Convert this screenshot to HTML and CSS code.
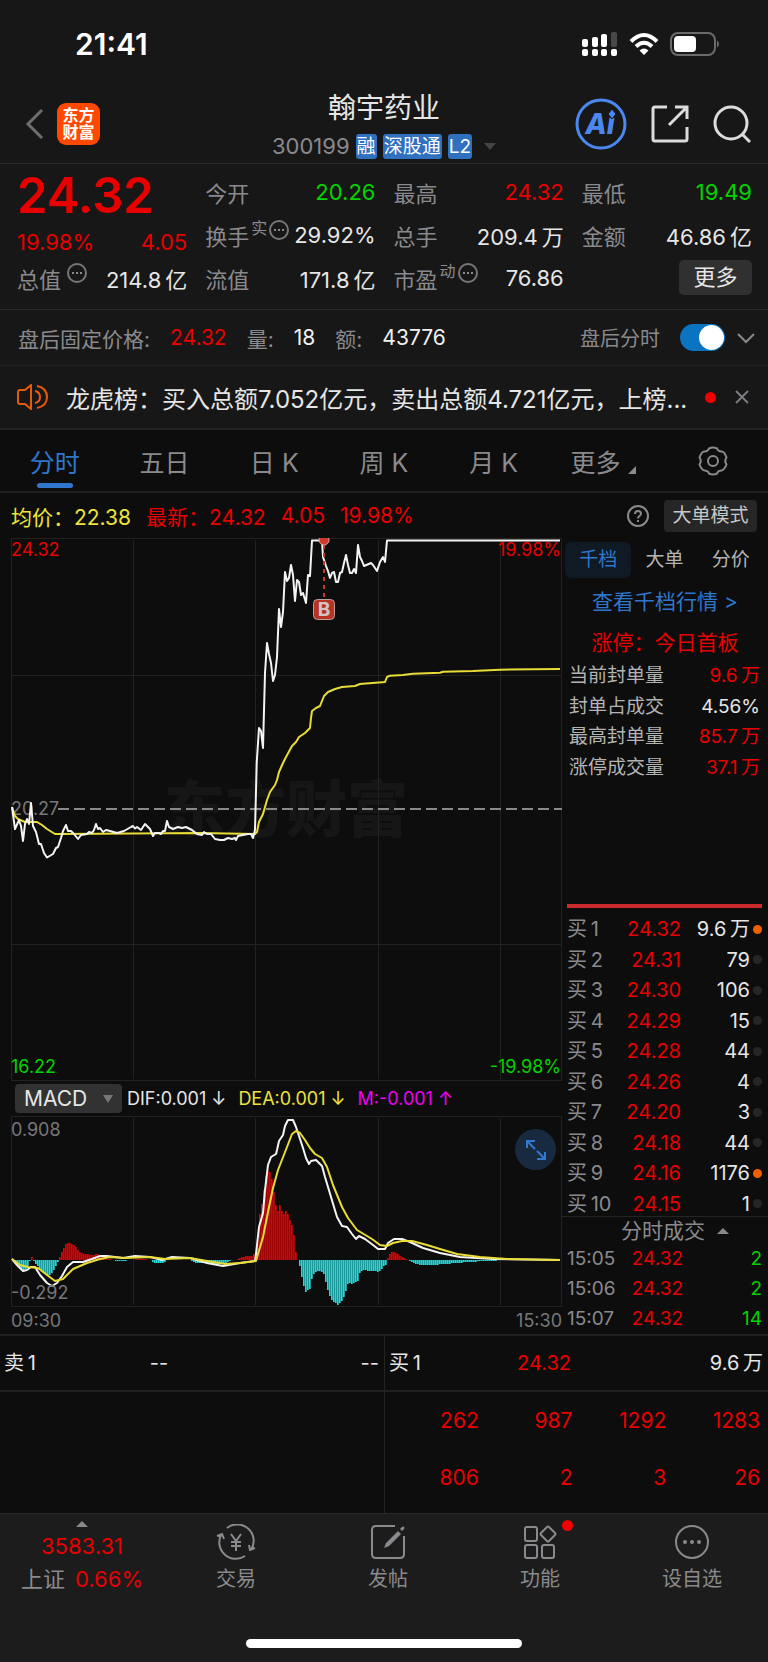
FILE: index.html
```html
<!DOCTYPE html>
<html lang="zh-CN">
	<head>
		<meta charset="utf-8">
		<meta name="viewport" content="width=device-width, initial-scale=1">
		<title>翰宇药业 300199</title>
		<link rel="stylesheet" href="styles.css">
	</head>
	<body>
		<div class="status-bar">
			<span class="clock">21:41</span>
			<div class="status-icons">
				<svg width="36" height="24" viewBox="0 0 36 24" fill="#fff">
					<rect x="0" y="7" width="6" height="8" rx="2"/>
					<rect x="10" y="5" width="6" height="10" rx="2"/>
					<rect x="19" y="2" width="6" height="13" rx="2"/>
					<rect x="29" y="0" width="6" height="15" rx="2" fill="#484848"/>
					<rect x="0" y="17" width="6" height="7" rx="2"/>
					<rect x="10" y="17" width="6" height="7" rx="2"/>
					<rect x="19" y="17" width="6" height="7" rx="2"/>
					<rect x="29" y="17" width="6" height="7" rx="2"/>
				</svg>
				<svg width="30" height="24" viewBox="0 0 30 24" fill="none" stroke="#fff" stroke-width="4">
					<path d="M2 9.500Q15 -3.500 28 9.500"/>
					<path d="M7 14.500Q15 7 23 14.500"/>
					<path d="M10.500 18.500Q15 14.500 19.500 18.500L15 23Z" fill="#fff" stroke="none"/>
				</svg>
				<svg width="49" height="24" viewBox="0 0 49 24">
					<rect x="1" y="1" width="44" height="22" rx="7" fill="none" stroke="#6b6b6b" stroke-width="2"/>
					<rect x="4" y="4" width="22" height="16" rx="4" fill="#fff"/>
					<path d="M47 8.500q2 1 2 3.500t-2 3.500z" fill="#6b6b6b"/>
				</svg>
			</div>
		</div>

		<header class="header">
			<div class="header-left">
				<button class="icon-button" aria-label="返回">
					<svg width="20" height="34" viewBox="0 0 20 34" fill="none" stroke="#6e6e6e" stroke-width="3"><path d="M17 3L3 17l14 14"/></svg>
				</button>
				<a class="logo" href="#">东方<br>财富</a>
			</div>
			<div class="stock">
				<h1>翰宇药业</h1>
				<p class="stock-code">300199 <span class="badge">融</span><span class="badge">深股通</span><span class="badge">L2</span><i class="tri-down"></i></p>
			</div>
			<div class="header-right">
				<button class="icon-button" aria-label="Ai">
					<svg width="52" height="52" viewBox="0 0 52 52">
						<circle cx="26" cy="26" r="24" fill="none" stroke="#4b87ee" stroke-width="3"/>
						<text class="ai-text" x="25" y="36" text-anchor="middle">Ai</text>
						<path d="M37 11l4 5-4 5-4-5z" fill="#4b87ee" stroke="#171717"/>
					</svg>
				</button>
				<button class="icon-button" aria-label="分享">
					<svg width="38" height="38" viewBox="0 0 38 38" fill="none" stroke="#dcdcdc" stroke-width="3"><path d="M16 2H4Q2 2 2 4v30q0 2 2 2h30q2 0 2-2V22M24 2h12v12M36 2L18 20"/></svg>
				</button>
				<button class="icon-button" aria-label="搜索">
					<svg width="38" height="38" viewBox="0 0 38 38" fill="none" stroke="#dcdcdc" stroke-width="3"><circle cx="18" cy="18" r="16"/><path d="M29 29l8 8"/></svg>
				</button>
			</div>
		</header>

		<section class="quote">
			<div class="price red">
				<strong>24.32</strong>
				<div class="change"><span>19.98%</span><span>4.05</span></div>
			</div>
			<div class="cell">今开<b class="green">20.26</b></div>
			<div class="cell">最高<b class="red">24.32</b></div>
			<div class="cell">最低<b class="green">19.49</b></div>
			<div class="cell">换手<sup>实</sup><svg class="more-dot" width="20" height="20" viewBox="0 0 20 20"><use href="#dots"/></svg><b>29.92%</b></div>
			<div class="cell">总手<b>209.4&thinsp;万</b></div>
			<div class="cell">金额<b>46.86&thinsp;亿</b></div>
			<div class="cell">总值<svg class="more-dot wide" width="20" height="20" viewBox="0 0 20 20"><use href="#dots"/></svg><b>214.8&thinsp;亿</b></div>
			<div class="cell">流值<b>171.8&thinsp;亿</b></div>
			<div class="cell">市盈<sup>动</sup><svg class="more-dot" width="20" height="20" viewBox="0 0 20 20"><use href="#dots"/></svg><b>76.86</b></div>
			<button class="more">更多</button>
		</section>

		<section class="after-hours">
			<span>盘后固定价格:</span><b class="red">24.32</b>
			<span>量:</span><b>18</b>
			<span>额:</span><b>43776</b>
			<label class="switch-label" for="after">盘后分时</label>
			<input class="switch" type="checkbox" id="after" checked>
			<svg width="18" height="12" viewBox="0 0 18 12" fill="none" stroke="#8a8a8e" stroke-width="2"><path d="M1 2l8 8 8-8"/></svg>
		</section>

		<section class="notice">
			<svg width="32" height="26" viewBox="0 0 32 26" fill="none" stroke="#e65a0c" stroke-width="2"><path d="M14 1v24L8 20H3q-2 0-2-2V8q0-2 2-2h5zM18 7q5 1 5 6t-5 6M20 2q10 2 10 11T20 24"/></svg>
			<p>龙虎榜：买入总额7.052亿元，卖出总额4.721亿元，上榜...</p>
			<i class="dot"></i>
			<button class="icon-button" aria-label="关闭">
				<svg width="14" height="14" viewBox="0 0 14 14" stroke="#7c7c80" stroke-width="2"><path d="M1 1l12 12M13 1L1 13"/></svg>
			</button>
		</section>

		<nav class="tabs">
			<a class="active" href="#">分时</a>
			<a href="#">五日</a>
			<a href="#">日 K</a>
			<a href="#">周 K</a>
			<a href="#">月 K</a>
			<a href="#">更多<i class="corner"></i></a>
			<a href="#" aria-label="设置">
				<svg width="30" height="30" viewBox="0 0 30 30" fill="none" stroke="#8a8a8e" stroke-width="2"><path d="M11 2.500Q15 .500 19 2.500Q20 5.500 23.500 5.500Q26.500 5.500 28.500 11.500Q26 15 28.500 18.500Q26.500 24 23.500 24.500Q20 24.500 19 27.500Q15 29.500 11 27.500Q10 24.500 6.500 24.500Q3.500 24 1.500 18.500Q4 15 1.500 11.500Q3.500 5.500 6.500 5.500Q10 5.500 11 2.500Z"/><circle cx="15" cy="15" r="5"/></svg>
			</a>
		</nav>

		<div class="info">
			<span class="yellow">均价：22.38</span>
			<span class="red">最新：24.32</span>
			<span class="red">4.05</span>
			<span class="red">19.98%</span>
			<button class="icon-button help" aria-label="帮助">
				<svg width="22" height="22" viewBox="0 0 22 22" fill="none" stroke="#8a8a8e" stroke-width="2"><circle cx="11" cy="11" r="10"/><path d="M8 9q0-3 3-3t3 2.500q0 1.500-1.500 2.500T11 13.500M11 15v2"/></svg>
			</button>
			<button class="big-order">大单模式</button>
		</div>

		<main class="main">
			<div class="charts">
				<svg class="chart" viewBox="11 538 551 543">
					<text class="watermark" x="164" y="832">东方财富</text>
					<path class="grid" d="M11.500 538V1081M133.500 540V1079M255.500 540V1079M378.500 540V1079M500.500 540V1079M561.500 538V1081M11 538.500H562M11 675.500H562M11 944.500H562M11 1080.500H562"/>
					<path class="base-line" d="M58 809H562"/>
					<text class="mute" x="11" y="815">20.27</text>
					<polyline class="line yellow-line" points="12,807 15,816 18,819 25,822 37,822 42,825 47,829 55,834 60,834 133,833.600 200,833 255,834 257,832 259,822 263,814 267,800 270,792 275,785 277,780 279,772 283,763 286,757 292,746 296,742 299,737 305,733 310,728 311,718 312,711 316,708 320,706 322,701 324,696 328,692 335,689 342,687 355,686 360,684 385,682 387,677 390,675.700 403,675 413,673.700 440,672.700 443,671.700 473,671 500,669.700 560,669"/>
					<polyline class="line white-line" points="12,807 15,829 19,820 21,826 23,841 25,824 27,819 29,824 31,803 33,826 36,832 39,844 41,844 44,853 47,857.500 53,854 56,848 58,847 61,838 63,831 66,825 68,831 71,831 74,834 78,839 81,835 87,834 89,832 92,833 94,830 96,824 98,829 100,828 103,832 106,830 110,831 117,833 124,831 131,827 133,826 135,828.500 137,827 141,830 145,824 150,829 153,836 155,833 159,833 161,834 163,831 165,831 167,821 169,827 173,829 178,827 182,828 186,827 192,830 197,834 202,835 204,832 207,834 211,834 215,839 220,840 224,840 228,838 232,839 235,838 236,840 238,836 243,835 248,834 251,834 253,838 255,830 256.700,763 259,728 261,731 263,748 265,673 267,643 269,654 271,663 273,681 275,675 277,657 279,609 281,627 283,612 285,572 287,581 289,578 291,565 293,575 295,601 297,580 299,582 301,595 303,593 306,603 308,575 310,576 312,540.500 322,540.500 323,557 326,566 328,571 330,578 332,573 334,572 336,582 338,582 340,573 342,572 344,563 346,555 348,565 350,573 352,573 354,569 356,573 358,545 360,557 362,561 364,566 371,563 373,565 377,571 380,562 383,557 385,562 387,540.500 560,540.500"/>
					<path d="M324 545V599" stroke="#c0392b" stroke-width="2" stroke-dasharray="4 4"/>
					<circle cx="324" cy="540" r="5" fill="#d03a2a" stroke="#d8a8a0"/>
					<rect x="313.500" y="599.500" width="21" height="20" rx="4" fill="#b93222" stroke="#b9a09c"/>
					<text class="mark" x="324" y="616" text-anchor="middle">B</text>
					<text class="high" x="11" y="556">24.32</text>
					<text class="high" x="561" y="556" text-anchor="end">19.98%</text>
					<text class="low" x="11" y="1073">16.22</text>
					<text class="low" x="561" y="1073" text-anchor="end">-19.98%</text>
				</svg>

				<div class="indicator">
					<div class="picker">
						<select aria-label="指标"><option>MACD</option></select>
						<i class="tri-down"></i>
					</div>
					<span>DIF:0.001 ↓</span>
					<span class="yellow">DEA:0.001 ↓</span>
					<span class="magenta">M:-0.001 ↑</span>
				</div>

				<div class="macd">
					<svg class="chart" viewBox="11 1116 551 191">
						<path class="grid" d="M11.500 1116V1307M133.500 1118V1305M255.500 1118V1305M378.500 1118V1305M500.500 1118V1305M561.500 1116V1307M11 1116.500H562M11 1306.500H562"/>
						<g id="bars"></g>
						<polyline class="line white-line" points="12,1259 17,1265 23,1271 27,1270 31,1267 35,1267 40,1275 47,1283 52,1286 57,1283 62,1276 67,1267 73,1262 83,1262 92,1259 100,1256 107,1256 123,1258 135,1256 150,1257 162,1260 172,1257 190,1258 207,1263 223,1266 240,1263 255,1261 256,1254 259,1227 263,1213 265,1190 268,1165 271,1157 276,1154 277,1150 279,1141 283,1135 285,1126 288,1120 293,1120 296,1127 299,1136 303,1148 306,1158 309,1164 311,1161 316,1160 322,1166 325,1177 331,1197 337,1217 342,1226 347,1227 352,1234 356,1239 359,1236 365,1239 373,1245 378,1249 385,1249 388,1243 394,1239 402,1239 410,1242 423,1248 440,1253 460,1257 493,1259 560,1260"/>
						<polyline class="line yellow-line" points="12,1259 20,1265 28,1267 38,1268 47,1275 55,1281 63,1279 73,1269 87,1263 100,1259 110,1257 125,1258 150,1257 165,1259 190,1258 207,1261 225,1264 240,1263 256,1261 258,1254 263,1237 268,1212 273,1188 278,1170 287,1147 292,1134 296,1131 300,1133 305,1140 310,1148 315,1154 322,1158 327,1167 333,1185 342,1207 348,1218 357,1230 372,1239 380,1245 387,1246 393,1243 402,1241 412,1241 427,1245 440,1249 457,1254 480,1257 507,1259 560,1260"/>
						<text class="mute" x="11" y="1136">0.908</text>
						<text class="mute" x="11" y="1299">-0.292</text>
					</svg>
					<button class="expand" aria-label="全屏">
						<svg width="22" height="22" viewBox="0 0 22 22" fill="none" stroke="#3079cf" stroke-width="2"><path d="M2 9V2h8M2 2l8 8M20 13v7h-8M20 20l-8-8"/></svg>
					</button>
				</div>

				<div class="axis"><span>09:30</span><span>15:30</span></div>
			</div>

			<aside class="side">
				<div class="side-tabs">
					<button class="active">千档</button>
					<button>大单</button>
					<button>分价</button>
				</div>
				<a class="depth-link" href="#">查看千档行情 &gt;</a>
				<h2 class="limit-title">涨停：今日首板</h2>
				<table class="limit">
					<tr><th>当前封单量</th><td class="red">9.6&thinsp;万</td></tr>
					<tr><th>封单占成交</th><td>4.56%</td></tr>
					<tr><th>最高封单量</th><td class="red">85.7&thinsp;万</td></tr>
					<tr><th>涨停成交量</th><td class="red">37.1&thinsp;万</td></tr>
				</table>

				<div class="ratio"></div>
				<table class="bids">
					<tr><th>买&thinsp;1</th><td class="red">24.32</td><td>9.6&thinsp;万</td><td><i class="on"></i></td></tr>
					<tr><th>买&thinsp;2</th><td class="red">24.31</td><td>79</td><td><i></i></td></tr>
					<tr><th>买&thinsp;3</th><td class="red">24.30</td><td>106</td><td><i></i></td></tr>
					<tr><th>买&thinsp;4</th><td class="red">24.29</td><td>15</td><td><i></i></td></tr>
					<tr><th>买&thinsp;5</th><td class="red">24.28</td><td>44</td><td><i></i></td></tr>
					<tr><th>买&thinsp;6</th><td class="red">24.26</td><td>4</td><td><i></i></td></tr>
					<tr><th>买&thinsp;7</th><td class="red">24.20</td><td>3</td><td><i></i></td></tr>
					<tr><th>买&thinsp;8</th><td class="red">24.18</td><td>44</td><td><i></i></td></tr>
					<tr><th>买&thinsp;9</th><td class="red">24.16</td><td>1176</td><td><i class="on"></i></td></tr>
					<tr><th>买&thinsp;10</th><td class="red">24.15</td><td>1</td><td><i></i></td></tr>
				</table>
				<h2 class="trades-title">分时成交<i class="tri-up"></i></h2>
				<table class="trades">
					<tr><th>15:05</th><td class="red">24.32</td><td class="green">2</td></tr>
					<tr><th>15:06</th><td class="red">24.32</td><td class="green">2</td></tr>
					<tr><th>15:07</th><td class="red">24.32</td><td class="green">14</td></tr>
				</table>
			</aside>
		</main>

		<section class="queue">
			<div class="queue-side">
				<div class="queue-head"><span>卖&thinsp;1</span><span>--</span><span>--</span></div>
			</div>
			<div class="queue-side">
				<div class="queue-head"><span>买&thinsp;1</span><span class="red">24.32</span><span>9.6&thinsp;万</span></div>
				<div class="queue-list red">
					<span>262</span><span>987</span><span>1292</span><span>1283</span>
					<span>806</span><span>2</span><span>3</span><span>26</span>
				</div>
			</div>
		</section>

		<footer class="footer">
			<nav class="bottom-nav">
				<a class="index" href="#">
					<i class="tri-up"></i>
					<span class="red">3583.31</span>
					<span>上证<b class="red">0.66%</b></span>
				</a>
				<a href="#">
					<svg width="40" height="36" viewBox="0 0 40 36" fill="none" stroke="#8a8a8e" stroke-width="2"><path d="M11 4A16.500 16.500 0 0 1 35 26M29 32A16.500 16.500 0 0 1 5 11M1 12l5-2 2 5M39 24l-5 2-1-5M15 10l5 7 5-7M20 17v10M15 18h10M15 22h10"/></svg>
					<span>交易</span>
				</a>
				<a href="#">
					<svg width="36" height="36" viewBox="0 0 36 36" fill="none" stroke="#8a8a8e" stroke-width="2"><path d="M25 2H6Q2 2 2 6v24q0 4 4 4h24q4 0 4-4V12"/><path d="M14 24l2-5L28 7l3 3-12 12zM30 5l2-2q1-1 2 0t0 2l-2 2z" fill="#8a8a8e" stroke="none"/></svg>
					<span>发帖</span>
				</a>
				<a href="#">
					<span class="icon-wrap">
						<svg width="36" height="36" viewBox="0 0 36 36" fill="none" stroke="#8a8a8e" stroke-width="2"><rect x="3" y="3" width="12" height="14" rx="2"/><rect x="3" y="21" width="12" height="13" rx="2"/><rect x="20" y="21" width="12" height="13" rx="2"/><path d="M25 3q1-1 2 0l6 6q1 1 0 2l-6 6q-1 1-2 0l-6-6q-1-1 0-2z"/></svg>
						<i class="dot"></i>
					</span>
					<span>功能</span>
				</a>
				<a href="#">
					<svg width="36" height="36" viewBox="0 0 36 36"><circle cx="18" cy="18" r="16" fill="none" stroke="#8a8a8e" stroke-width="2"/><g fill="#8a8a8e"><circle cx="11" cy="18" r="2"/><circle cx="18" cy="18" r="2"/><circle cx="25" cy="18" r="2"/></g></svg>
					<span>设自选</span>
				</a>
			</nav>
			<div class="home-bar"></div>
		</footer>

		<svg class="defs" width="0" height="0">
			<g id="dots"><circle cx="10" cy="10" r="9" fill="none" stroke="#77777b" stroke-width="2"/><path d="M5 9h2v2H5zM9 9h2v2H9zM13 9h2v2h-2z" fill="#8a8a8e"/></g>
		</svg>

		<script>
			// runs of MACD bars: first x, then one height per 2px step
			var runs = [
				[14, -2, -4, -7, -8, -9, -11, -9, -6, -1, 3, -1, -4, -6, -9, -11, -13, -15, -16, -15, -13, -10, -6, -2],
				[60, 3, 8, 12, 16, 17, 17, 16, 15, 13, 10, 8, 7, 6, 6, 6, 5, 5, 5, 6, 6, 5, 4, 3, 2, 1, 1],
				[116, -1, -1, -1, -1, -1, -1],
				[136, 1, 1, 1, 1, 1, 1],
				[153, -2, -3, -3, -3, -3, -3, -2],
				[192, -1, -2, -3, -3, -3, -3, -3, -3, -3, -3, -4, -4, -4, -4, -4, -4, -3, -3, -2, -1],
				[238, 1, 2, 3, 3, 4, 4, 4, 4, 6],
				[258, 20, 46, 56, 70, 84, 89, 88, 81, 68, 55, 49, 55, 49, 46, 49, 46, 40, 35, 25, 8],
				[300, -6, -17, -26, -32, -30, -29, -19, -14, -12, -11, -11, -12, -14, -22, -30, -36, -40, -42, -43, -45, -43, -41, -37, -31, -24, -23, -24, -23, -22, -21, -13, -11, -10, -10, -11, -11, -11, -11, -11, -12, -11, -9, -6, -5],
				[388, 2, 6, 8, 8, 7, 6, 4, 3, 2, 1],
				[410, -1, -2, -3, -4, -4, -5, -5, -5, -5, -5, -5, -5, -5, -5, -5, -4, -4, -4, -4, -4, -4, -3, -3, -3, -3, -3, -3, -2, -2, -2, -2, -2, -2, -2, -1, -1, -1, -1, -1, -1, -1, -1, -1, -1]
			];
			var html = "";
			runs.forEach(function(run) {
				for (var i = 1; i < run.length; i++) {
					var h = run[i];
					html += '<rect class="' + (h > 0 ? "up" : "down") + '" x="' + (run[0] + i * 2 - 3) +
						'" y="' + (h > 0 ? 1260 - h : 1260) + '" width="1.7" height="' + Math.abs(h) + '"/>';
				}
			});
			document.getElementById("bars").innerHTML = html;
		</script>
	</body>
</html>
```
FILE: styles.css
```css
* {
	box-sizing: border-box;
}

body {
	margin: 0;
	background-color: #0d0d0d;
	color: #e6e6e6;
	font-family: Inter, "Noto Sans CJK SC", sans-serif;
	font-size: 20px;
	white-space: nowrap;
}

h1, h2, p {
	margin: 0;
	font-weight: 400;
}

a {
	color: inherit;
	text-decoration: none;
}

b, th {
	font-weight: 400;
}

svg {
	display: block;
	flex: none;
}

button, select {
	font: inherit;
	color: inherit;
	border: 0;
	padding: 0;
	background: none;
}

.red { color: #e80000; }
.green { color: #00d400; }
.yellow { color: #ece33c; }
.magenta { color: #f000f0; }

.defs {
	position: absolute;
}

.tri-down, .tri-up {
	display: inline-block;
	border: 6px solid transparent;
}

.tri-down {
	border-top: 7px solid #444446;
	border-bottom: 0;
}

.tri-up {
	border-bottom: 6px solid #8a8a8e;
	border-top: 0;
}

.dot {
	width: 11px;
	height: 11px;
	border-radius: 50%;
	background-color: #f00000;
}

/* status bar and header */
.status-bar, .header, .quote, .after-hours, .notice {
	background-color: #171717;
}

.status-bar {
	display: flex;
	justify-content: space-between;
	align-items: center;
	height: 80px;
	padding: 8px 49px 0 75px;
}

.clock {
	color: #fff;
	font-size: 30px;
	font-weight: 600;
}

.status-icons {
	display: flex;
	gap: 11px;
}

.header {
	display: grid;
	grid-template-columns: 1fr auto 1fr;
	align-items: center;
	padding: 8px 17px 3px;
	border-bottom: 1px solid #2a2a2a;
}

.header-left, .header-right {
	display: flex;
	align-items: center;
}

.header-left {
	gap: 12px;
	padding-left: 8px;
}

.header-right {
	justify-content: flex-end;
	gap: 24px;
}

.logo {
	width: 43px;
	padding: 4px 0;
	border-radius: 9px;
	background-color: #ff4800;
	color: #fff;
	font-size: 16px;
	font-weight: 700;
	line-height: 17px;
	text-align: center;
}

.ai-text {
	fill: #4b87ee;
	font-size: 28px;
	font-weight: 800;
	font-style: italic;
}

.stock {
	text-align: center;
}

.stock h1 {
	font-size: 28px;
	line-height: 40px;
}

.stock-code {
	display: flex;
	align-items: center;
	gap: 6px;
	padding-top: 4px;
	color: #8a8a8e;
	font-size: 22px;
	line-height: 28px;
}

.stock-code .tri-down {
	margin-left: 6px;
}

.badge {
	padding: 0 1px;
	border-radius: 3px;
	background-color: #2f70bf;
	color: #fff;
	font-size: 19px;
	line-height: 25px;
}

/* quote */
.quote {
	display: grid;
	grid-template-columns: repeat(4, 1fr);
	grid-auto-rows: 43px;
	column-gap: 18px;
	padding: 6px 16px 10px 17px;
	border-bottom: 1px solid #2a2a2a;
	font-size: 22px;
}

.price {
	grid-row: span 2;
	display: flex;
	flex-direction: column;
	justify-content: space-between;
	padding-top: 2px;
}

.price strong {
	font-size: 49px;
	font-weight: 600;
	line-height: 48px;
}

.change {
	display: flex;
	justify-content: space-between;
	line-height: 28px;
}

.cell {
	display: flex;
	align-items: center;
	color: #8a8a8e;
}

.cell b {
	margin-left: auto;
	color: #e6e6e6;
}

.cell b.red { color: #e80000; }
.cell b.green { color: #00d400; }

.cell sup {
	padding: 0 2px 14px;
	font-size: 16px;
	line-height: 20px;
}

.more-dot {
	margin-bottom: 10px;
}

.more-dot.wide {
	margin-left: 6px;
}

.more {
	justify-self: end;
	align-self: center;
	width: 73px;
	border-radius: 5px;
	background-color: #303030;
	line-height: 35px;
}

.after-hours {
	display: flex;
	align-items: center;
	height: 56px;
	padding: 0 13px 0 18px;
	border-bottom: 1px solid #202020;
	color: #8a8a8e;
	font-size: 21px;
}

.after-hours b {
	margin: 0 20px;
}

.after-hours b:not(.red) {
	color: #f0f0f0;
}

.switch-label {
	margin-left: auto;
	font-size: 20px;
}

.switch {
	appearance: none;
	display: flex;
	justify-content: flex-end;
	width: 45px;
	height: 27px;
	margin: 0 12px 0 20px;
	padding: 1px;
	border-radius: 14px;
	background-color: #0a73c2;
}

.switch::before {
	content: "";
	width: 25px;
	border-radius: 50%;
	background-color: #fff;
}

.notice {
	display: flex;
	align-items: center;
	height: 64px;
	padding: 0 19px 0 17px;
	border-bottom: 2px solid #222;
	font-size: 24px;
}

.notice p {
	flex: 1;
	margin-left: 17px;
	overflow: hidden;
}

.notice .dot {
	margin: 0 19px;
}

/* tabs */
.tabs {
	display: grid;
	grid-template-columns: repeat(7, 1fr);
	height: 63px;
	border-bottom: 2px solid #202020;
	color: #8a8a8e;
	font-size: 25px;
}

.tabs a {
	display: flex;
	align-items: center;
	justify-content: center;
	position: relative;
}

.tabs .active {
	color: #2f77cc;
}

.tabs .active::after {
	content: "";
	position: absolute;
	bottom: 3px;
	width: 36px;
	height: 5px;
	border-radius: 3px;
	background-color: #2f77cc;
}

.corner {
	margin: 18px 0 0 8px;
	border-left: 8px solid transparent;
	border-bottom: 8px solid #8a8a8e;
}

.info {
	display: flex;
	align-items: center;
	gap: 15px;
	height: 45px;
	padding: 0 11px;
	font-size: 21px;
}

.help {
	margin-left: auto;
}

.big-order {
	width: 93px;
	border-radius: 4px;
	background-color: #262626;
	color: #c8c8c8;
	font-size: 19px;
	line-height: 32px;
}

/* charts */
.main {
	display: grid;
	grid-template-columns: minmax(0, 1fr) 206px;
}

.charts {
	padding-left: 11px;
}

.chart {
	width: 100%;
	font-size: 18px;
}

.grid {
	fill: none;
	stroke: #222;
}

.line {
	fill: none;
	stroke-width: 2;
	stroke-linejoin: round;
}

.white-line { stroke: #f4f4f4; }
.yellow-line { stroke: #e8dc36; }

.base-line {
	stroke: #8a8a8e;
	stroke-width: 2;
	stroke-dasharray: 11 5;
}

.watermark {
	fill: #161616;
	font-size: 61px;
	font-weight: 900;
}

.mute { fill: #77777b; }
.high { fill: #e80000; }
.low { fill: #00d400; }

.mark {
	fill: #d0c4c4;
	font-size: 19px;
	font-weight: 700;
}

.up { fill: #e00000; }
.down { fill: #22d8d8; }

.indicator {
	display: flex;
	align-items: center;
	gap: 12px;
	height: 35px;
	padding-left: 4px;
	font-size: 18px;
}

.picker {
	display: grid;
	align-items: center;
	width: 107px;
	margin-right: -7px;
}

.picker select, .picker .tri-down {
	grid-area: 1 / 1;
}

.picker select {
	appearance: none;
	height: 29px;
	padding-left: 9px;
	border-radius: 4px;
	background-color: #323232;
	font-size: 21px;
}

.picker .tri-down {
	justify-self: end;
	margin-right: 9px;
	border-width: 8px 5px 0;
	border-top-color: #77777b;
	pointer-events: none;
}

.macd {
	position: relative;
}

.expand {
	position: absolute;
	top: 13px;
	right: 6px;
	display: grid;
	place-items: center;
	width: 41px;
	height: 41px;
	border-radius: 50%;
	background-color: #182a40;
}

.axis {
	display: flex;
	justify-content: space-between;
	color: #77777b;
	font-size: 18px;
	line-height: 27px;
}

/* side panel */
.side {
	display: flex;
	flex-direction: column;
	padding-top: 4px;
}

.side table {
	border-collapse: collapse;
	line-height: 26px;
}

.side th, .side td {
	padding: 0;
}

.side th {
	text-align: left;
}

.side td {
	text-align: right;
}

.side-tabs {
	display: grid;
	grid-template-columns: repeat(3, 1fr);
	padding: 0 4px 0 3px;
	color: #b4b4b4;
	font-size: 19px;
	line-height: 36px;
}

.side-tabs .active {
	border-radius: 6px;
	background-color: #101a25;
	color: #2f77cc;
}

.depth-link {
	margin-top: 4px;
	color: #2f77cc;
	font-size: 21px;
	line-height: 40px;
	text-align: center;
}

.limit-title {
	margin-top: 3px;
	color: #e80000;
	font-size: 21px;
	line-height: 36px;
	text-align: center;
}

.limit {
	height: 122px;
	margin: 0 8px 0 7px;
	font-size: 19px;
}

.limit th {
	color: #b4b4b4;
}

.ratio {
	height: 4px;
	margin: auto 6px 6px 5px;
	background-color: #cc2a2c;
}

.bids {
	height: 305px;
	margin: 0 6px -3px 5px;
	table-layout: fixed;
}

.bids th, .trades th {
	width: 50px;
	color: #8a8a8e;
}

.bids td:nth-child(2) { width: 64px; }

.bids td:last-child { width: 12px; }

.bids i {
	display: block;
	width: 9px;
	height: 9px;
	margin-left: auto;
	border-radius: 50%;
	background-color: #262626;
}

.bids .on {
	background-color: #f06000;
}

.trades-title {
	border-top: 1px solid #242424;
	padding-left: 20px;
	color: #8a8a8e;
	font-size: 21px;
	line-height: 27px;
	text-align: center;
}

.trades-title .tri-up {
	margin: 0 0 4px 12px;
}

.trades {
	height: 90px;
	margin: 0 6px 0 5px;
	font-size: 19px;
}

.trades td:nth-child(2) { width: 66px; }

/* order queue */
.queue {
	display: grid;
	grid-template-columns: 1fr 1fr;
	border-top: 2px solid #202020;
}

.queue-side + .queue-side {
	border-left: 1px solid #242424;
}

.queue-head {
	display: grid;
	grid-template-columns: 44px 222px 1fr;
	padding: 0 5px 0 4px;
	border-bottom: 2px solid #202020;
	line-height: 54px;
}

.queue-head :nth-child(2) {
	text-align: center;
}

.queue-head :nth-child(3) {
	text-align: right;
}

.queue-list {
	display: grid;
	grid-template-columns: repeat(4, 1fr);
	padding: 0 8px 7px 0;
	font-size: 21px;
	line-height: 57px;
	text-align: right;
}

/* bottom navigation */
.footer {
	padding-bottom: 15px;
	border-top: 1px solid #2a2a2a;
	background-color: #1c1c1c;
}

.bottom-nav {
	display: grid;
	grid-template-columns: repeat(5, 1fr);
	height: 87px;
	padding-left: 8px;
	color: #8a8a8e;
}

.bottom-nav a {
	display: flex;
	flex-direction: column;
	align-items: center;
	gap: 5px;
	padding-top: 10px;
	line-height: 28px;
}

.bottom-nav .index {
	padding: 7px 0 0;
	margin-left: -4px;
	font-size: 22px;
}

.index b {
	margin-left: 10px;
}

.icon-wrap {
	position: relative;
}

.icon-wrap .dot {
	position: absolute;
	top: -4px;
	right: -15px;
}

.home-bar {
	width: 36%;
	height: 9px;
	margin: 38px auto 0;
	border-radius: 5px;
	background-color: #fff;
}
```
